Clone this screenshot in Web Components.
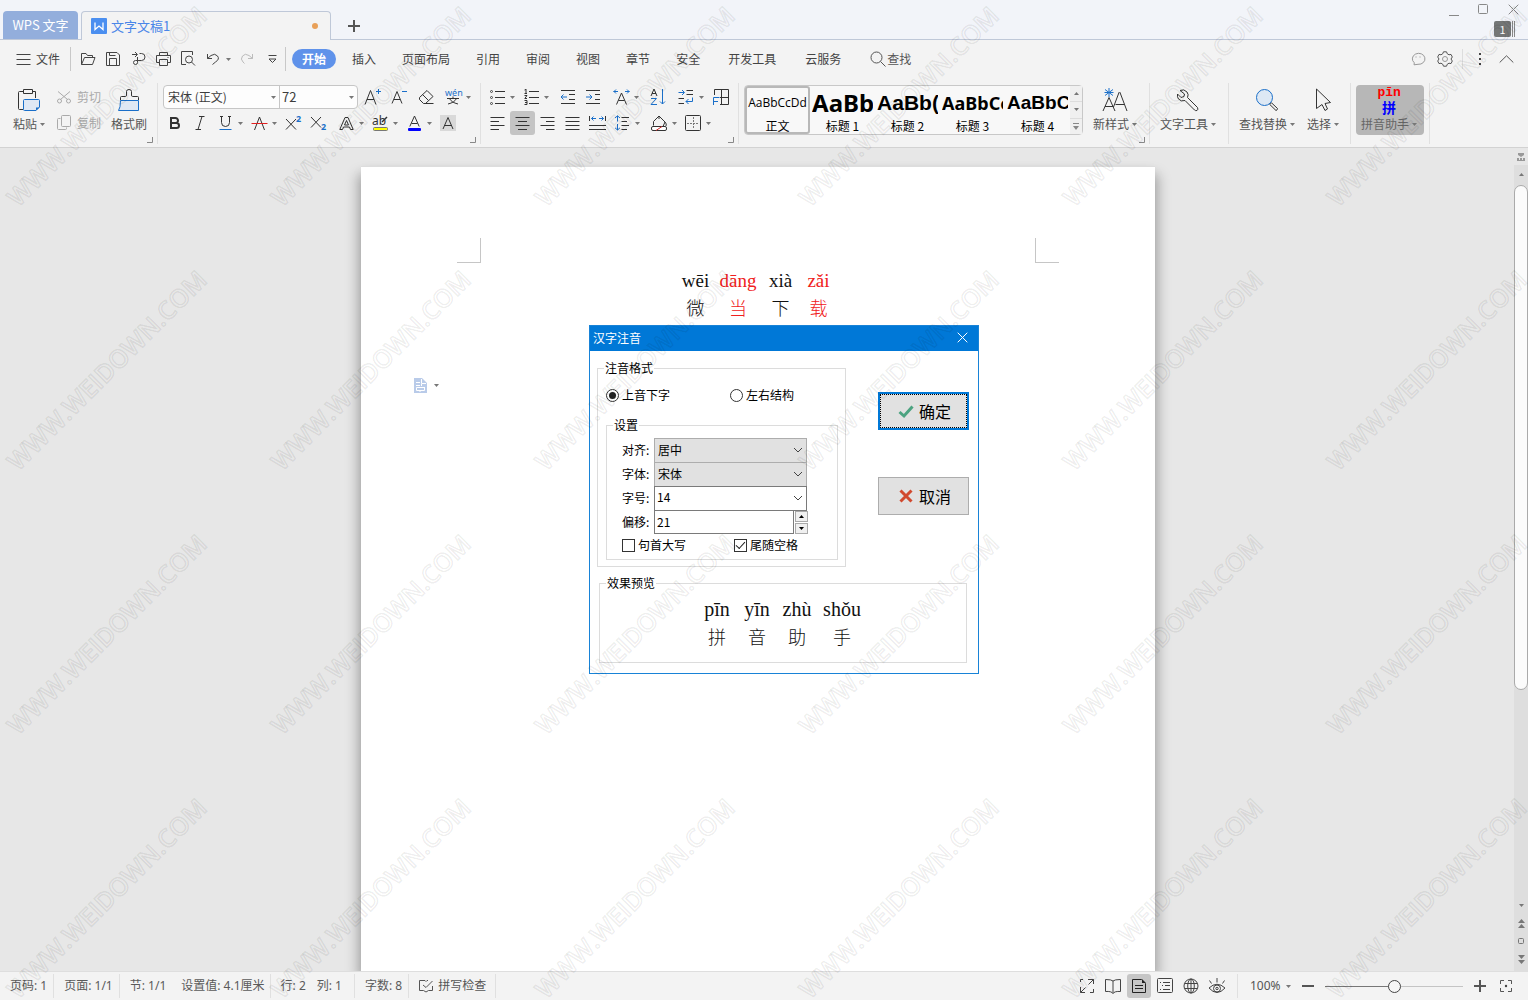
<!DOCTYPE html>
<html lang="zh-CN">
<head>
<meta charset="utf-8">
<title>文字文稿1 - WPS 文字</title>
<style>
  html, body { margin: 0; height: 100%; overflow: hidden; }
  body { font: 12px/18px "Noto Sans CJK SC", sans-serif; color: #3c3c3c; background: #f3f3f3; }
</style>
</head>
<body>
<wps-app></wps-app>
<script>
const BASE = `
  *, ::before, ::after { box-sizing: border-box; }
  :host { display: block; box-sizing: border-box; }
  :host([hidden]) { display: none; }
  button, input, select { font: inherit; color: inherit; margin: 0; }
  button { border: 0; padding: 0; background: none; }
  a { color: inherit; text-decoration: none; }
`;
function component(name, style, html, setup) {
  const t = document.createElement('template');
  t.innerHTML = `<style>${BASE}${style}</style>${html}`;
  customElements.define(name, class extends HTMLElement {
    constructor() {
      super();
      this.attachShadow({ mode: 'open' }).append(t.content.cloneNode(true));
    }
    connectedCallback() { if (setup) setup(this, this.shadowRoot); }
  });
}

const B = 'stroke="#1a6fc9"';
const ICONS = {
  logo: [16, 16, '<rect width="16" height="16" rx="1" fill="#4b8ff0" stroke="none"/><path stroke="#fff" stroke-width="1.3" d="M4 4.500V11.500L8 8L12 11.500V4.500"/>'],
  plus: [12, 12, '<path stroke-width="2" d="M6 0V12M0 6H12"/>'],
  winmin: [11, 11, '<path d="M1 11.500H11"/>'],
  winmax: [11, 11, '<rect x=".5" y=".5" width="9" height="9" rx="1"/>'],
  close: [11, 11, '<path d="M.7 .7L10.300 10.300M10.300 .7L.7 10.300"/>'],
  menu: [15, 12, '<path d="M.5 1.500H14.500M.5 6.500H14.500M.5 11.500H14.500"/>'],
  folder: [16, 14, '<path d="M1.500 12.500V1.500H6L7.500 3.500H12.500V5.500M1.500 12.500L4.500 5.500H15L12.500 12.500Z"/>'],
  save: [14, 14, '<path d="M.5 .5H11L13.500 3V13.500H.5ZM3.500 13V6.500H10.500V13M3.500 .5V3.500H9.500"/>'],
  export: [15, 15, '<path d="M1 3.500H6M4 1L6.500 3.500L4 6M8.500 2.500H10.500A3.500 3.500 0 0 1 10.500 9.500H4.500A2 2 0 1 0 6.500 11.500V6"/>'],
  print: [15, 14, '<path d="M3.500 3.500V.5H11.500V3.500M3.500 10.500H.5V3.500H14.500V10.500H11.500M3.500 7.500H11.500V13.500H3.500ZM11.500 5.500H12.500"/>'],
  preview: [16, 15, '<path d="M6 13.500H1.500V.5H12.500V4M11.500 11L15 14.500"/><circle cx="9" cy="8.500" r="3.500"/>'],
  undo: [14, 14, '<path d="M1.500 2V6.500H6M1.500 6.500L5 3.500Q9 .8 11.500 4T9.500 10L6.500 12.500"/>'],
  redo: [14, 14, '<path d="M12.500 2V6.500H8M12.500 6.500L9 3.500Q5 .8 2.500 4T3 10L4.500 11.500"/>'],
  more: [9, 8, '<path d="M.5 .5H8.500M1 4L4.500 7.500L8 4Z"/>'],
  search: [16, 16, '<circle cx="6.500" cy="6.500" r="5.500"/><path d="M10.500 10.500L15.500 15.500"/>'],
  chat: [15, 14, '<path d="M3 12.800L3.300 10.800A6.300 5.500 0 1 1 7 12.300ZM5 4.500V5.500M9 4.500V5.500" />'],
  gear: [16, 16, '<path d="M6.500 .8H9.500L10.300 2.800L12 3.800L14 3.400L15.300 6L14 8L15.300 10L14 12.600L12 12.200L10.300 13.200L9.500 15.200H6.500L5.700 13.200L4 12.200L2 12.600L.7 10L2 8L.7 6L2 3.400L4 3.800L5.700 2.800Z"/><circle cx="8" cy="8" r="2.500" stroke="#999"/>'],
  dots: [4, 14, '<path stroke="none" fill="#444" d="M1 1h2v2H1zM1 6h2v2H1zM1 11h2v2H1z"/>'],
  up: [15, 8, '<path d="M.7 7.500L7.500 .8L14.300 7.500"/>'],
  paste: [24, 24, '<path stroke="#333" d="M7 3.500H2.500Q1.500 3.500 1.500 4.500V20.500Q1.500 21.500 2.500 21.500H6M15 3.500H18.500V10M6.500 1.500H15.500V5.500H6.500Z"/><path fill="#dfe8f4" stroke="#1a6fc9" d="M6.500 12.500Q6.500 11.500 7.500 11.500H21.500Q22.500 11.500 22.500 12.500V19L19 22.500H7.500Q6.500 22.500 6.500 21.500Z"/><path fill="#1a6fc9" d="M19 22.500V19.500H22.500Z" stroke="none"/>'],
  cut: [14, 14, '<path d="M1 1.500L10.500 9.500M13 1.500L3.500 9.500"/><circle cx="2.500" cy="11" r="2"/><circle cx="11.500" cy="11" r="2"/>'],
  copy: [15, 16, '<path d="M3.500 3.500H1.500Q.5 3.500 .5 4.500V13.500Q.5 14.500 1.500 14.500H8.500Q9.500 14.500 9.500 13.500V12.500"/><rect x="4.500" y=".5" width="9" height="11" rx="1"/>'],
  brush: [24, 24, '<path stroke="#333" d="M3.500 12V9.500Q3.500 8.500 4.500 8.500H8.500Q9.500 8.500 9.500 7V3.500Q9.500 1.500 12 1.500T14.500 3.500V7Q14.500 8.500 15.500 8.500H20.500Q21.500 8.500 21.500 9.500V12"/><path fill="#dfe8f4" stroke="#1a6fc9" d="M3.500 12.500H21.500V22.500H1.500Q3.500 20 3.500 12.500Z"/>'],
  grow: [17, 16, '<path d="M1 15.500L6.500 1.500L12 15.500M3 10.500H10"/><path '+B+' d="M14.500 0V5M12 2.500H17"/>'],
  shrink: [17, 16, '<path d="M1 14.500L6 2.500L11 14.500M3 10.500H9"/><path '+B+' d="M11 2.500H16"/>'],
  eraser: [17, 16, '<path d="M1.500 8.500L9 1.500L15 7.500L7.500 14.500H5.500L1.500 10.500ZM4.500 5.500L10.500 11.500M6 14.500H15.500"/>'],
  wen: [17, 16, '<text x="0" y="6.500" font-family="Noto Sans" font-size="9" fill="#1a6fc9" stroke="none">wén</text><path d="M2 9.500H14M8 7.500V9.500M4.500 9.500Q6.500 13.500 13 15M11.500 9.500Q9.500 13.500 3 15"/>'],
  bold: [12, 14, '<path stroke-width="2" d="M2 2H6.500A2.500 2.500 0 0 1 6.500 7H2ZM2 7H7.500A2.500 2.500 0 0 1 7.500 12H2Z"/>'],
  italic: [10, 14, '<path d="M4 .5H9.500M.5 13.500H6M7 .5L3 13.500"/>'],
  underline: [13, 16, '<path d="M2.500 1V7.500A4 4 0 0 0 10.500 7.500V1M1 1.500H4M9 1.500H12"/><path '+B+' d="M.5 14.500H12.500"/>'],
  strike: [17, 16, '<path d="M3.500 15L8.500 2L13.500 15"/><path stroke="#e02020" d="M.5 8.500H16.500"/>'],
  sup: [17, 16, '<path d="M1 4L11 14.500M11 4L1 14.500"/><text x="11" y="7" font-family="Noto Sans" font-weight="bold" font-size="9" fill="#1a6fc9" stroke="none">2</text>'],
  sub: [17, 16, '<path d="M1 2L11 12.500M11 2L1 12.500"/><text x="11" y="15" font-family="Noto Sans" font-weight="bold" font-size="9" fill="#1a6fc9" stroke="none">2</text>'],
  outlineA: [15, 16, '<path d="M.8 14.500L6 2.500H9L14.200 14.500H11.500L10.500 12H4.500L3.500 14.500ZM7.500 5.500L5.500 10H9.500Z"/>'],
  highlight: [17, 18, '<text x="0" y="11" font-family="Noto Sans" font-size="12" fill="#333" stroke="none">ab</text><path stroke-width="1.500" d="M10 8L15 3"/><rect x="1.500" y="13.500" width="14" height="3" rx="1" fill="#ff0" stroke="#777"/>'],
  fontA: [15, 16, '<path d="M2.800 11.500L7.500 1L12.200 11.500M4.500 8.500H10.500"/><rect x="1" y="13" width="13" height="3" rx="1" fill="#00f" stroke="none"/>'],
  shadeA: [16, 16, '<rect width="16" height="16" fill="#d9d9d9" stroke="none"/><path d="M3 14L8 2.500L13 14M4.500 10.500H11.500"/>'],
  bullets: [15, 16, '<path d="M5 2.500H15M5 8.500H15M5 14.500H15"/><g stroke="#444"><circle cx="1.500" cy="2.500" r="1"/><circle cx="1.500" cy="8.500" r="1"/><circle cx="1.500" cy="14.500" r="1"/></g>'],
  numbers: [15, 16, '<path d="M5 2.500H15M5 8.500H15M5 14.500H15M2 0V4.500M.5 1L2 .5M.5 4.500H3M.5 6.500H3L.8 9.500H3M.5 11.500H3V15.500H.5M1 13.500H3"/>'],
  outdent: [16, 16, '<path d="M1 1.500H15M9 5.500H15M9 10.500H15M1 14.500H15"/><path '+B+' d="M1 8H7M3.500 5.500L1 8L3.500 10.500"/>'],
  indent: [16, 16, '<path d="M1 1.500H15M10 5.500H15M10 10.500H15M1 14.500H15"/><path '+B+' d="M1 8H7M4.500 5.500L7 8L4.500 10.500"/>'],
  scaleA: [17, 16, '<path d="M3.500 15.500L8.500 4L13.500 15.500M5.500 11.500H11.500"/><path '+B+' d="M.5 2.500H5M3 .5L1 2.500L3 4.500M12 2.500H16.500M14 .5L16 2.500L14 4.500"/>'],
  sort: [17, 16, '<path d="M1 7L4 0L7 7M2 4.500H6"/><path '+B+' d="M1 9.500H6.500L1 15.500H7M12.500 0V15M10 12.500L12.500 15L15 12.500"/>'],
  wrap: [16, 16, '<path d="M8.500 1.500H15M8.500 5.500H15M.5 9.500H6M.5 14.500H6"/><path '+B+' d="M.5 3.500H6M4 1L6.500 3.500L4 6M14.500 8.500V12.500H8M10.500 10L8 12.500L10.500 15"/>'],
  tableF: [17, 16, '<path d="M2.500 6V.5H16.500V15.500H8M9.500 .5V15M8 8.500H16.500"/><path '+B+' d="M1.500 16V8.500H7.500M1.500 12.500H6"/>'],
  left: [15, 16, '<path d="M.5 2.500H14.500M.5 6.500H9M.5 10.500H14.500M.5 14.500H9"/>'],
  center: [15, 16, '<path d="M.5 2.500H14.500M3 6.500H12M.5 10.500H14.500M3 14.500H12"/>'],
  right: [15, 16, '<path d="M.5 2.500H14.500M6 6.500H14.500M.5 10.500H14.500M6 14.500H14.500"/>'],
  justify: [15, 16, '<path d="M.5 2.500H14.500M.5 6.500H14.500M.5 10.500H14.500M.5 14.500H14.500"/>'],
  spread: [17, 16, '<path d="M.5 1V6M16.500 1V6M0 10.500H17M0 14.500H17"/><path '+B+' d="M2.500 3.500H7M4.500 1.500L2.500 3.500L4.500 5.500M10 3.500H14.500M12.500 1.500L14.500 3.500L12.500 5.500"/>'],
  spacing: [16, 16, '<path d="M7.500 2.500H15M7.500 6.500H13M7.500 10.500H15M7.500 14.500H13"/><path '+B+' d="M3.500 .8V6.500M1 3L3.500 .8L6 3M3.500 9V15M1 12.800L3.500 15L6 12.800"/>'],
  bucket: [17, 18, '<path d="M2.500 7.500L8 2L14 8L12 12.500M2.500 7.500V11.500M8 2V5M14 8Q16 10 15 12"/><rect x=".5" y="12.500" width="15" height="4" rx="1.500" fill="#fff"/><path stroke="#d02b2b" d="M5 16.500L11 12.500"/>'],
  borders: [17, 16, '<rect x=".5" y=".5" width="15" height="15" rx="1"/><path stroke="#777" stroke-dasharray="2 1" d="M8.500 2V14M2 8.500H14"/>'],
  newstyle: [26, 26, '<path stroke="#333" d="M1 24L7 10.500L13 24M3 19.500H11M11.500 20L17 5.500Q17.500 4.500 18 5.500L25 24M13.500 17.500H22"/><path '+B+' d="M7 1V10M3 2.500L11 8.500M11 2.500L3 8.500M2.500 5.500H11.500"/>'],
  wrench: [24, 24, '<path stroke="#333" d="M4 2.500Q8 .5 11 4Q13 6.500 11.500 9.500L21.500 19.500Q22.500 21.500 21 22.500Q19.500 23 18.500 22L9 12.500Q5 14 2.500 11Q1 9 1.500 6L5 9.500L8 8.500L8.500 6Z"/>'],
  find: [24, 24, '<circle cx="9.500" cy="9.500" r="8" fill="#dde8f4" stroke="#1a6fc9"/><path stroke="#333" d="M14.800 16.500L16.500 14.800L22.500 20.500Q22.500 22 21 22.500Z"/>'],
  cursor: [24, 24, '<path stroke="#333" d="M5.500 1L19.500 14.500L14 15.500L16.500 21L14 22.500L11 16.500L5.500 20.500Z"/>'],
  smarttag: [13, 15, '<path fill="#b9cbe9" stroke="none" d="M0 0H8L13 5V15H0Z"/><path stroke="#fff" d="M2 4.500H6M2 7.500H6M7.500 1V5.500H12M7.500 6V8M2.500 9.500H11M2.500 9.500V12.500H10.500V9.500M6 13V14"/>'],
  tick: [16, 13, '<path stroke="#4ca381" stroke-width="3" d="M1.500 7L6 11L14.500 1.500"/>'],
  cross: [14, 14, '<path stroke="#d1492e" stroke-width="3" d="M1.500 1.500L12.500 12.500M12.500 1.500L1.500 12.500"/>'],
  chev: [10, 6, '<path d="M1 1L5 5L9 1"/>'],
  spell: [16, 14, '<path d="M4 1.500H1.500V11.500H5.500L8 13L10.500 11.500H14.500V7M4 1.500H7L8 2.500L9 1.500H10M5 6L8 8.500L14.500 2"/>'],
  expand: [16, 16, '<path d="M9 1.500H14.500V6M14.500 1.500L9.500 6.500M1.500 9V14.500H6M1.500 14.500L6.500 9.500M1.500 4V1.500H4M11 14.500H14.500V11"/>'],
  book: [16, 16, '<path d="M8 3V15.500M8 3Q6.500 1.500 .5 1.500V13.500Q6.500 13 8 15.500Q9.500 13 15.500 13.500V1.500Q9.500 1.500 8 3"/>'],
  page: [14, 16, '<path stroke="#222" d="M.5 1.500H9.500L13.500 5.500V14.500H.5ZM3 7.500H11M3 10.500H11"/><path fill="#222" stroke="none" d="M10 1V5H14Z"/>'],
  outline: [16, 16, '<rect x=".5" y=".5" width="15" height="14" rx="1"/><path d="M3 4.500H4M6 4.500H13M5 7.500H6M8 7.500H13M3 11.500H4M6 11.500H13"/>'],
  globe: [16, 16, '<circle cx="8" cy="8" r="7"/><ellipse cx="8" cy="8" rx="3.300" ry="7"/><path d="M8 1V15M1.500 5.500H14.500M1.500 10.500H14.500"/>'],
  eye: [18, 16, '<path d="M1 10Q9 2.500 17 10Q9 19 1 10ZM9 4.500V0M3.500 5.500L1.500 2.500M14.500 5.500L16.500 2.500"/><circle cx="9" cy="10.500" r="3.500"/><circle cx="9" cy="10.500" r="1.200"/>'],
  minus: [12, 12, '<path stroke-width="2" d="M0 6H12"/>'],
  fit: [12, 12, '<path d="M.5 4V.5H4M8 .5H11.500V4M11.500 8V11.500H8M4 11.500H.5V8"/><circle cx="6" cy="6" r="1.200" fill="#444" stroke="none"/>'],
  down5: [5, 3, '<path fill="#777" stroke="none" d="M0 0H5L2.500 3Z"/>'],
  up5: [5, 3, '<path fill="#777" stroke="none" d="M0 3H5L2.500 0Z"/>'],
  up5s: [5, 3, '<path fill="#000" stroke="none" d="M0 3H5L2.500 0Z"/>'],
  down5s: [5, 3, '<path fill="#000" stroke="none" d="M0 0H5L2.500 3Z"/>'],
  gallerymore: [6, 7, '<path fill="#888" stroke="none" d="M0 0H6V1H0ZM0 3H6L3 7Z"/>'],
  dblup: [7, 9, '<path fill="#777" stroke="none" d="M0 4H7L3.500 0ZM0 9H7L3.500 5Z"/>'],
  dbldown: [7, 9, '<path fill="#777" stroke="none" d="M0 0H7L3.500 4ZM0 5H7L3.500 9Z"/>'],
  square: [6, 6, '<rect x=".5" y=".5" width="5" height="5" rx="1" stroke="#777"/>'],
  ruler: [8, 8, '<path fill="#999" stroke="none" d="M1 0H7V2L4 4L1 2ZM0 5H8V8H0Z"/><path stroke="#e7e7e7" d="M2.500 5V7M5.500 5V7"/>'],
  launcher: [6, 6, '<path stroke="#888" d="M5.500 0V5.500H0"/>']
};
/* snap="odd" pads the width to an odd number and the height to an even one, so lines stay crisp in 25px cells; snap="even" makes both even */
component('ui-icon', ':host{display:inline-flex;flex:none} span{display:flex} svg{display:block;overflow:visible}', '<span></span>', (el, root) => {
  let [w, h, body] = ICONS[el.getAttribute('name')];
  const snap = el.getAttribute('snap');
  if (snap) { h += h % 2; w += snap === 'odd' ? 1 - w % 2 : w % 2; }
  root.querySelector('span').innerHTML =
    `<svg width="${w}" height="${h}" viewBox="0 0 ${w} ${h}" fill="none" stroke="currentColor" aria-hidden="true">${body}</svg>`;
});

/* Small ribbon button: a 25px icon cell with an optional drop arrow */
component('tool-btn', `
  :host { display: flex; height: 24px; }
  button { display: flex; align-items: center; border-radius: 3px; height: 24px; color: #333; }
  span { width: 25px; display: flex; justify-content: center; }
  :host([active]) button { background: #c4c4c4; }
  .arrow { display: none; margin-right: 4px; }
  :host([drop]) .arrow { display: inline-flex; }
`, '<button type="button"><span></span><ui-icon class="arrow" name="down5"></ui-icon></button>', (el, root) => {
  root.querySelector('button').setAttribute('aria-label', el.getAttribute('icon'));
  root.querySelector('span').innerHTML = `<ui-icon snap="odd" name="${el.getAttribute('icon')}"></ui-icon>`;
});

/* Large ribbon button: icon above its caption */
component('big-btn', `
  :host { display: flex; height: 50px; }
  button { display: flex; flex-direction: column; align-items: center; height: 50px; border-radius: 4px; color: #555; }
  .pic { height: 30px; display: flex; align-items: center; }
  .cap { display: flex; align-items: center; gap: 3px; white-space: nowrap; }
  .arrow { display: none; }
  :host([drop]) .arrow { display: inline-flex; }
  :host([pressed]) button { background: #b7b7b7; padding: 0 7px 0 5px; color: #666; }
`, '<button type="button"><span class="pic"><slot name="icon"></slot></span><span class="cap"><slot></slot><ui-icon class="arrow" name="down5"></ui-icon></span></button>');

component('rib-group', `
  :host { display: flex; position: relative; align-items: flex-start; height: 61px; padding-top: 2px; border-right: 1px solid #e0e0e0; flex: none; }
  .launch { position: absolute; right: 4px; bottom: 1px; display: none; }
  :host([launch]) .launch { display: flex; }
`, '<slot></slot><button type="button" class="launch" aria-label="更多设置"><ui-icon name="launcher"></ui-icon></button>');

component('title-tabs', `
  :host { display: flex; align-items: flex-end; height: 40px; background: #f2f4f9; border-bottom: 1px solid #bfc8d8; padding-left: 3px; font-size: 13px; }
  a { display: flex; align-items: center; height: 28px; border-radius: 4px 4px 0 0; }
  .home { background: #93aedc; color: #fff; width: 75px; justify-content: center; margin-right: 3px; white-space: nowrap; }
  .doc { flex: 0 1 250px; height: 29px; margin-bottom: -1px; background: #f3f3f3; border: 1px solid #bfc8d8; border-bottom: 0; padding: 0 12px 0 9px; color: #4a86e8; gap: 4px; }
  .dot { width: 6px; height: 6px; border-radius: 50%; background: #e8a058; margin-left: auto; }
  .add { color: #555; align-self: center; margin: 13px 0 0 17px; display: flex; }
  .right { margin-left: auto; align-self: stretch; display: flex; flex-direction: column; align-items: flex-end; gap: 6px; padding-top: 4px; color: #888; }
  .win { display: flex; gap: 19px; padding-right: 9px; }
  .win button { display: flex; }
  .badge { display: flex; gap: 1px; margin-right: 13px; }
  b { width: 17px; height: 16px; border-radius: 2px; background: #747676; color: #fff; font: 11px/16px "Noto Sans CJK SC", sans-serif; text-align: center; }
  i { width: 3px; border: solid #888; border-width: 0 1px; }
`, `<a class="home" href="#home">WPS 文字</a>
  <a class="doc" href="#doc"><ui-icon name="logo"></ui-icon><span>文字文稿1</span><span class="dot"></span></a>
  <button type="button" class="add" aria-label="新建"><ui-icon name="plus"></ui-icon></button>
  <div class="right">
    <div class="win"><button type="button" aria-label="最小化"><ui-icon name="winmin"></ui-icon></button><button type="button" aria-label="最大化"><ui-icon name="winmax"></ui-icon></button><button type="button" aria-label="关闭"><ui-icon name="close"></ui-icon></button></div>
    <div class="badge"><b>1</b><i></i></div>
  </div>`);

component('menu-bar', `
  :host { display: flex; align-items: center; height: 38px; padding: 0 14px 0 16px; white-space: nowrap; color: #444; }
  button, a { display: flex; align-items: center; height: 20px; }
  .file { gap: 5px; }
  hr { width: 1px; height: 24px; border: 0; margin: 0; background: #c8c8c8; flex: none; }
  .file + hr { margin-left: 10px; }
  .quick { display: flex; align-items: center; margin: 0 0 0 5px; }
  .quick button { width: 25px; justify-content: center; }
  .quick button.thin { width: 5px; margin-right: 4px; }
  .quick .off { color: #bbb; }
  nav { display: flex; margin-left: 6px; }
  nav a { padding: 0 13px; }
  nav a.on { background: #5f92ea; color: #fff; font-weight: bold; border-radius: 10px; padding: 0 10px; margin-right: 3px; }
  nav.extra { margin-left: 1px; }
  nav.extra a { padding: 0 15px 0 14px; }
  .find { gap: 1px; margin-left: 14px; color: #555; }
  .side { display: flex; align-items: center; gap: 11px; margin-left: auto; color: #555; }
  .side .faint { color: #999; }
  .side hr { background: #ddd; margin: 0 4px 0 -2px; height: 20px; }
  .side .fold { margin-left: 6px; }
`, `<button type="button" class="file"><ui-icon name="menu"></ui-icon>文件</button><hr>
  <div class="quick">
    ${['folder', 'save', 'export', 'print', 'preview', 'undo'].map(n => `<button type="button" aria-label="${n}"><ui-icon snap="odd" name="${n}"></ui-icon></button>`).join('')}
    <button type="button" class="thin" aria-label="撤销列表"><ui-icon name="down5"></ui-icon></button>
    <button type="button" class="off" aria-label="恢复"><ui-icon snap="odd" name="redo"></ui-icon></button>
    <button type="button" aria-label="自定义"><ui-icon snap="odd" name="more"></ui-icon></button>
  </div><hr>
  <nav><a class="on" href="#start">开始</a><a href="#insert">插入</a><a href="#layout">页面布局</a><a href="#ref">引用</a><a href="#review">审阅</a><a href="#view">视图</a><a href="#chapter">章节</a><a href="#safe">安全</a></nav>
  <nav class="extra"><a href="#dev">开发工具</a><a href="#cloud">云服务</a></nav>
  <button type="button" class="find"><ui-icon name="search"></ui-icon>查找</button>
  <div class="side"><ui-icon class="faint" name="chat"></ui-icon><ui-icon name="gear"></ui-icon><hr><ui-icon name="dots"></ui-icon><ui-icon class="fold" name="up"></ui-icon></div>`);

component('style-gallery', `
  :host { display: flex; height: 50px; width: 339px; border: 1px solid #c8c8c8; border-radius: 4px; background: #f8f8f8; color: #000; }
  button.item { width: 65px; height: 48px; padding: 0; display: flex; flex-direction: column; align-items: center; justify-content: flex-start; border: 2px solid transparent; border-radius: 3px; }
  button.item.on { border-color: #b8b8b8; }
  .s { flex: none; width: 61px; height: 28px; line-height: 30px; overflow: hidden; white-space: nowrap; text-align: left; font-weight: bold; font-family: "Noto Sans", sans-serif; }
  .n { font-size: 12px; font-weight: normal; font-family: "Open Sans", sans-serif; text-align: center; }
  .h1 { font-size: 24px; } .h3 { font-size: 18px; }
  .h2 { font-size: 21px; font-family: "Liberation Sans", sans-serif; }
  .h4 { font-size: 19px; font-family: "Liberation Sans", sans-serif; }
  .cap { line-height: 20px; }
  .nav { margin-left: auto; width: 12px; display: flex; flex-direction: column; background: #f0f0f0; }
  .nav button { flex: 1; display: flex; align-items: center; justify-content: center; }
  .nav button + button { border-top: 1px solid #ddd; }
`, `<button type="button" class="item on"><span class="s n">AaBbCcDd</span><span class="cap">正文</span></button>
  <button type="button" class="item"><span class="s h1">AaBb</span><span class="cap">标题 1</span></button>
  <button type="button" class="item"><span class="s h2">AaBb(</span><span class="cap">标题 2</span></button>
  <button type="button" class="item"><span class="s h3">AaBbCc</span><span class="cap">标题 3</span></button>
  <button type="button" class="item"><span class="s h4">AaBbC</span><span class="cap">标题 4</span></button>
  <div class="nav"><button type="button" aria-label="上"><ui-icon name="up5"></ui-icon></button><button type="button" aria-label="下"><ui-icon name="down5"></ui-icon></button><button type="button" aria-label="全部"><ui-icon name="gallerymore"></ui-icon></button></div>`);

component('ribbon-bar', `
  :host { display: flex; height: 70px; padding-top: 5px; border-bottom: 1px solid #d2d2d2; overflow: hidden; }
  .clip { padding: 2px 10px 0 13px; }
  .small { display: flex; flex-direction: column; gap: 8px; margin: 3px 10px 0 12px; }
  .small button { display: flex; align-items: center; gap: 6px; height: 18px; color: #aaa; white-space: nowrap; }
  .small ui-icon { width: 14px; }
  .rows { display: flex; flex-direction: column; gap: 2px; }
  .row, .set { display: flex; }
  .row { gap: 3px; }
  .fontgrp { padding-left: 5px; padding-right: 5px; }
  .para { padding-left: 4px; padding-right: 5px; }
  .top { gap: 2px; }
  .combos { display: flex; height: 24px; width: 195px; border: 1px solid #c6c6c6; border-radius: 4px; background: #fdfdfd; }
  label { display: grid; align-items: center; width: 115px; }
  label + label { width: 78px; border-left: 1px solid #c6c6c6; }
  select { grid-area: 1/1; appearance: none; border: 0; background: none; width: 100%; height: 20px; padding: 0 2px 0 4px; line-height: 20px; }
  label + label select { font-size: 13px; padding-left: 2px; }
  label ui-icon { grid-area: 1/1; justify-self: end; margin-right: 3px; pointer-events: none; }
  .styles { padding-left: 5px; padding-right: 12px; gap: 10px; }
  .plain { padding-left: 10px; padding-right: 12px; gap: 12px; }
  .plain + .plain { padding-right: 11px; }
  .py { padding-left: 5px; padding-right: 5px; }
  .badge { display: flex; flex-direction: column; align-items: center; font-weight: bold; font-size: 14px; line-height: 16px; color: #00f; height: 28px; padding-top: 1px; }
  .badge b { font: bold 13px/12px "Liberation Mono", monospace; color: #f00; }
`, `<rib-group class="clip" launch>
    <big-btn drop><ui-icon slot="icon" name="paste"></ui-icon>粘贴</big-btn>
    <div class="small"><button type="button"><ui-icon name="cut"></ui-icon>剪切</button><button type="button"><ui-icon name="copy"></ui-icon>复制</button></div>
    <big-btn><ui-icon slot="icon" name="brush"></ui-icon>格式刷</big-btn>
  </rib-group>
  <rib-group class="fontgrp" launch><div class="rows">
    <div class="row top"><div class="combos">
      <label><select aria-label="字体"><option>宋体 (正文)</option></select><ui-icon name="down5"></ui-icon></label>
      <label><select aria-label="字号"><option>72</option></select><ui-icon name="down5"></ui-icon></label></div>
      <tool-btn icon="grow"></tool-btn><tool-btn icon="shrink"></tool-btn><tool-btn icon="eraser"></tool-btn><tool-btn icon="wen" drop></tool-btn></div>
    <div class="row"><div class="set"><tool-btn icon="bold"></tool-btn><tool-btn icon="italic"></tool-btn><tool-btn icon="underline" drop></tool-btn><tool-btn icon="strike" drop></tool-btn><tool-btn icon="sup"></tool-btn><tool-btn icon="sub"></tool-btn></div>
      <div class="set"><tool-btn icon="outlineA" drop></tool-btn><tool-btn icon="highlight" drop></tool-btn><tool-btn icon="fontA" drop></tool-btn><tool-btn icon="shadeA"></tool-btn></div></div>
  </div></rib-group>
  <rib-group class="para" launch><div class="rows">
    <div class="row"><div class="set"><tool-btn icon="bullets" drop></tool-btn><tool-btn icon="numbers" drop></tool-btn></div>
      <div class="set"><tool-btn icon="outdent"></tool-btn><tool-btn icon="indent"></tool-btn></div>
      <tool-btn icon="scaleA" drop></tool-btn><tool-btn icon="sort"></tool-btn>
      <div class="set"><tool-btn icon="wrap" drop></tool-btn><tool-btn icon="tableF"></tool-btn></div></div>
    <div class="row"><div class="set"><tool-btn icon="left"></tool-btn><tool-btn icon="center" active></tool-btn><tool-btn icon="right"></tool-btn><tool-btn icon="justify"></tool-btn><tool-btn icon="spread"></tool-btn><tool-btn icon="spacing" drop></tool-btn></div>
      <div class="set"><tool-btn icon="bucket" drop></tool-btn><tool-btn icon="borders" drop></tool-btn></div></div>
  </div></rib-group>
  <rib-group class="styles" launch><style-gallery></style-gallery><big-btn drop><ui-icon slot="icon" name="newstyle"></ui-icon>新样式</big-btn></rib-group>
  <rib-group class="plain"><big-btn drop><ui-icon slot="icon" name="wrench"></ui-icon>文字工具</big-btn></rib-group>
  <rib-group class="plain"><big-btn drop><ui-icon slot="icon" name="find"></ui-icon>查找替换</big-btn><big-btn drop><ui-icon slot="icon" name="cursor"></ui-icon>选择</big-btn></rib-group>
  <rib-group class="py"><big-btn drop pressed><span slot="icon" class="badge"><b>pīn</b>拼</span>拼音助手</big-btn></rib-group>`);

/* A syllable over its character; len sets the column width in letters */
component('pinyin-line', ':host{display:flex;justify-content:center;gap:10px}', '<slot></slot>');
component('pinyin-pair', `
  :host { display: flex; flex-direction: column; align-items: center; color: #111; }
  :host([len="3"]) { width: var(--w3, 28px); }
  :host([len="4"]) { width: var(--w4, 37px); }
  :host([red]) { color: #f02020; }
  .p { font: var(--ps, 19px)/27px "Liberation Serif", serif; white-space: nowrap; }
  .h { font-size: 18px; line-height: 26px; font-weight: 300; }
`, '<span class="p"><slot name="py"></slot></span><span class="h"><slot></slot></span>');

component('doc-page', `
  :host { width: 794px; background: #fff; border-top: 1px solid #ddd; padding-top: 71px; box-shadow: -4px 8px 12px rgba(0,0,0,.22), 4px 8px 12px rgba(0,0,0,.22); position: relative; }
  .marks { display: flex; justify-content: space-between; padding: 0 96px; }
  .marks span { width: 24px; height: 25px; border: solid #c6c6c6; border-width: 0 1px 1px 0; }
  .marks span + span { border-width: 0 0 1px 1px; }
  .text { padding: 4px 120px 0 118px; }
  .tag { position: absolute; left: 53px; top: 211px; display: flex; gap: 7px; align-items: center; }
`, `<div class="marks"><span></span><span></span></div><div class="text"><slot></slot></div>
  <button type="button" class="tag" aria-label="粘贴选项"><ui-icon name="smarttag"></ui-icon><ui-icon name="down5"></ui-icon></button>`);

component('scroll-rail', `
  :host { display: flex; flex-direction: column; width: 14px; flex: none; color: #777; }
  .top { height: 17px; display: flex; align-items: center; justify-content: center; }
  .track { flex: 1; display: flex; flex-direction: column; background: #dedede; padding-bottom: 3px; }
  .track button { height: 18px; display: flex; align-items: center; justify-content: center; flex: none; }
  .lane { flex: 1; padding-top: 2px; }
  .thumb { height: 71%; background: #fbfbfb; border: 1px solid #aaa; border-radius: 7px; }
`, `<div class="top"><ui-icon name="ruler"></ui-icon></div>
  <div class="track"><button type="button" aria-label="向上"><ui-icon name="up5"></ui-icon></button><div class="lane"><div class="thumb"></div></div>
  <button type="button" aria-label="向下"><ui-icon name="down5"></ui-icon></button><button type="button" aria-label="上一页"><ui-icon name="dblup"></ui-icon></button><button type="button" aria-label="选择对象"><ui-icon name="square"></ui-icon></button><button type="button" aria-label="下一页"><ui-icon name="dbldown"></ui-icon></button></div>`);

component('pinyin-dialog', `
  :host { position: absolute; left: 589px; top: 177px; width: 390px; border: 1px solid #1883d7; background: #fff; color: #000; z-index: 2; }
  header { display: flex; align-items: center; justify-content: space-between; height: 25px; padding: 0 10px 2px 3px; background: #0078d7; color: #fff; }
  header button { display: flex; }
  main { padding: 8px 11px 10px 7px; }
  .upper { display: flex; justify-content: space-between; margin-right: -2px; }
  fieldset { margin: 0; padding: 0; border: 1px solid #dcdcdc; min-width: 0; }
  legend { margin-left: 6px; padding: 0 1px; line-height: 18px; }
  .fmt { width: 249px; }
  .fmtbody { padding: 9px 7px 6px 8px; }
  .pair { display: grid; grid-template-columns: 1fr 1fr; }
  .pair label, .field { display: flex; align-items: center; }
  .pair label { gap: 3px; height: 18px; }
  .cfg { margin-top: 12px; }
  .cfgbody { padding: 4px 0 5px 15px; }
  .cfgbody .pair { grid-template-columns: 112px 1fr; margin-top: 2px; }
  .fmtbody > .pair { grid-template-columns: 124px 1fr; }
  .field { height: 24px; }
  .field > label { width: 32px; }
  .combo { display: grid; width: 153px; align-items: center; }
  select { grid-area: 1/1; appearance: none; border-radius: 0; border: 1px solid #adadad; background: #e1e1e1; height: 25px; padding: 0 3px; width: 100%; }
  .combo.white select { background: #fff; border-color: #7a7a7a; padding: 0 2px 2px; }
  .combo ui-icon { grid-area: 1/1; justify-self: end; margin-right: 4px; pointer-events: none; color: #444; }
  input[type=text] { width: 140px; height: 24px; border: 1px solid #7a7a7a; padding: 0 2px 2px; background: #fff; }
  .spin { display: flex; flex-direction: column; gap: 1px; margin-left: 1px; }
  .spin button { width: 13px; height: 11px; background: #f0f0f0; border: 1px solid #aaa; display: flex; align-items: center; justify-content: center; }
  input[type=radio], input[type=checkbox] { appearance: none; width: 13px; height: 13px; border: 1px solid #333; background: #fff; display: grid; place-items: center; }
  input[type=radio] { border-radius: 50%; }
  input[type=radio]:checked::after { content: ""; width: 7px; height: 7px; border-radius: 50%; background: #222; }
  input[type=checkbox]:checked::after { content: ""; width: 9px; height: 5px; border: solid #222; border-width: 0 0 1px 1px; transform: rotate(-48deg) translate(1px, -1px); }
  .acts { display: flex; flex-direction: column; gap: 47px; padding-top: 33px; }
  .acts button { width: 91px; height: 38px; display: flex; align-items: center; justify-content: center; gap: 5px; padding-left: 2px; font-size: 16px; background: #e1e1e1; border: 1px solid #adadad; }
  .acts .ok { border: 2px solid #0078d7; outline: 1px dotted #000; outline-offset: -3px; }
  .acts ui-icon { width: 16px; justify-content: center; }
  .view { margin-top: 7px; margin-left: 2px; }
  .viewbody { padding: 4px 2px 13px 0; --ps: 20px; --w3: 30px; --w4: 40px; }
`, `<header><span>汉字注音</span><button type="button" aria-label="关闭"><ui-icon name="close"></ui-icon></button></header>
  <main>
    <div class="upper">
      <fieldset class="fmt"><legend>注音格式</legend><div class="fmtbody">
        <div class="pair"><label><input type="radio" name="fmt" checked>上音下字</label><label><input type="radio" name="fmt">左右结构</label></div>
        <fieldset class="cfg"><legend>设置</legend><div class="cfgbody">
          <div class="field"><label for="al">对齐:</label><div class="combo"><select id="al"><option>居中</option></select><ui-icon name="chev"></ui-icon></div></div>
          <div class="field"><label for="ff">字体:</label><div class="combo"><select id="ff"><option>宋体</option></select><ui-icon name="chev"></ui-icon></div></div>
          <div class="field"><label for="fs">字号:</label><div class="combo white"><select id="fs"><option>14</option></select><ui-icon name="chev"></ui-icon></div></div>
          <div class="field"><label for="of">偏移:</label><input id="of" type="text" value="21"><div class="spin"><button type="button" aria-label="增加"><ui-icon name="up5s"></ui-icon></button><button type="button" aria-label="减少"><ui-icon name="down5s"></ui-icon></button></div></div>
          <div class="pair"><label><input type="checkbox">句首大写</label><label><input type="checkbox" checked>尾随空格</label></div>
        </div></fieldset>
      </div></fieldset>
      <div class="acts"><button type="button" class="ok"><ui-icon name="tick"></ui-icon>确定</button><button type="button"><ui-icon name="cross"></ui-icon>取消</button></div>
    </div>
    <fieldset class="view"><legend>效果预览</legend><div class="viewbody"><pinyin-line>
      <pinyin-pair len="3"><span slot="py">pīn</span>拼</pinyin-pair><pinyin-pair len="3"><span slot="py">yīn</span>音</pinyin-pair><pinyin-pair len="3"><span slot="py">zhù</span>助</pinyin-pair><pinyin-pair len="4"><span slot="py">shǒu</span>手</pinyin-pair>
    </pinyin-line></div></fieldset>
  </main>`);

component('doc-area', `
  :host { display: flex; flex: 1; min-height: 0; background: #e7e7e7; position: relative; overflow: hidden; }
  .canvas { flex: 1; display: flex; justify-content: center; padding: 18px 0 0 2px; overflow: hidden; }
`, '<div class="canvas"><slot></slot></div><scroll-rail></scroll-rail><slot name="dialog"></slot>');

component('status-bar', `
  :host { display: flex; align-items: center; height: 29px; border-top: 1px solid #dedede; color: #5a5a5a; white-space: nowrap; padding-right: 16px; font-family: "Noto Sans", "Noto Sans CJK SC", sans-serif; }
  .seg { display: flex; align-items: center; height: 24px; padding: 0 6px 0 10px; border-right: 1px solid #e0e0e0; gap: 4px; }
  .wide { gap: 15px; padding-right: 5px; }
  .near { gap: 11px; padding-right: 12px; }
  .spell { padding-left: 9px; padding-right: 9px; color: #555; }
  .views { display: flex; margin-left: auto; gap: 2px; padding-right: 8px; border-right: 1px solid #e0e0e0; color: #444; }
  .views button { width: 24px; height: 24px; border-radius: 3px; display: flex; align-items: center; justify-content: center; }
  .views .on { background: #c6c6c6; }
  .zoom { display: flex; align-items: center; gap: 11px; padding-left: 12px; color: #555; }
  .pct { display: flex; align-items: center; justify-content: space-between; width: 41px; }
  .fit { margin-left: 3px; }
  input { appearance: none; width: 138px; height: 14px; background: linear-gradient(to right, #777 50%, #c4c4c4 50%) center/100% 1px no-repeat; }
  input::-webkit-slider-thumb { appearance: none; width: 13px; height: 13px; border: 1px solid #444; border-radius: 50%; background: #f6f6f6; }
`, `<div class="seg">页码: 1</div><div class="seg">页面: 1/1</div><div class="seg wide"><span>节: 1/1</span><span>设置值: 4.1厘米</span></div>
  <div class="seg near"><span>行: 2</span><span>列: 1</span></div><div class="seg">字数: 8</div>
  <div class="seg spell"><ui-icon name="spell"></ui-icon><span>拼写检查</span></div>
  <div class="views">${['expand', 'book', 'page', 'outline', 'globe', 'eye'].map(n => `<button type="button" aria-label="${n}"${n === 'page' ? ' class="on"' : ''}><ui-icon snap="even" name="${n}"></ui-icon></button>`).join('')}</div>
  <div class="zoom"><button type="button" class="pct">100%<ui-icon name="down5"></ui-icon></button><ui-icon name="minus"></ui-icon><input type="range" min="0" max="100" value="50" aria-label="缩放"><ui-icon name="plus"></ui-icon><ui-icon class="fit" name="fit"></ui-icon></div>`);

/* Tiled diagonal watermark above everything */
component('water-mark', `
  :host { position: absolute; inset: 0; overflow: hidden; pointer-events: none; z-index: 10; }
  div { display: grid; grid-template-columns: repeat(6, 264px); grid-auto-rows: 264px; }
  svg { display: block; overflow: visible; }
  text { font: 600 25px "Open Sans", sans-serif; fill: rgba(0,0,0,.01); stroke: rgba(0,0,0,.075); stroke-width: 1.5px; }
`, '<div></div>', (el, root) => {
  root.querySelector('div').innerHTML = Array.from({ length: 24 }, () =>
    '<svg width="264" height="264" viewBox="0 0 264 264" aria-hidden="true"><text transform="translate(18 208) rotate(-45)">WWW.WEIDOWN.COM</text></svg>').join('');
});

component('wps-app', `
  :host { display: flex; flex-direction: column; height: 100vh; position: relative; overflow: hidden; }
`, `<title-tabs></title-tabs><menu-bar></menu-bar><ribbon-bar></ribbon-bar>
  <doc-area>
    <doc-page><pinyin-line>
      <pinyin-pair len="3"><span slot="py">wēi</span>微</pinyin-pair><pinyin-pair len="4" red><span slot="py">dāng</span>当</pinyin-pair><pinyin-pair len="3"><span slot="py">xià</span>下</pinyin-pair><pinyin-pair len="3" red><span slot="py">zǎi</span>载</pinyin-pair>
    </pinyin-line></doc-page>
    <pinyin-dialog slot="dialog"></pinyin-dialog>
  </doc-area>
  <status-bar></status-bar><water-mark></water-mark>`);
</script>
</body>
</html>
